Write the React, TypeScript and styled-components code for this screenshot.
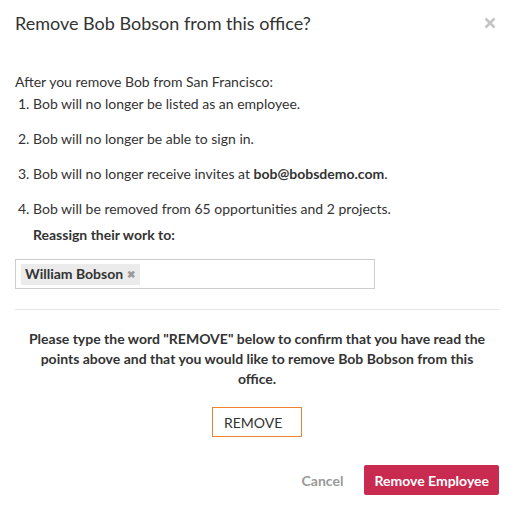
import React, { useState } from "react";
import styled, { createGlobalStyle } from "styled-components";

const GlobalStyle = createGlobalStyle`
  body {
    margin: 0;
    background: #fff;
    font-family: Lato, "Open Sans", Arial, sans-serif;
    color: #333;
  }
`;

const Modal = styled.div`
  width: 514px;
  background: #fff;
`;

const Header = styled.div`
  display: flex;
  align-items: center;
  justify-content: space-between;
  height: 46px;
  padding: 0 18px 0 15px;
  box-sizing: border-box;
`;

const Title = styled.h3`
  margin: 0;
  font-size: 18px;
  font-weight: 400;
  line-height: 22px;
  color: #333;
`;

const CloseButton = styled.button`
  border: 0;
  background: none;
  padding: 0;
  width: 12px;
  height: 14px;
  display: flex;
  align-items: center;
  justify-content: center;
  cursor: pointer;
`;

const Body = styled.div`
  padding: 26px 15px 0;
  font-size: 14px;
  line-height: 20px;
`;

const Intro = styled.p`
  margin: 0 0 2px;
`;

const Steps = styled.ol`
  margin: 0;
  padding-left: 18px;
`;

const Step = styled.li`
  margin-bottom: 15px;
  &:last-child {
    margin-bottom: 6px;
  }
`;

const Label = styled.div`
  padding-left: 18px;
  font-weight: 700;
  margin-bottom: 14px;
`;

const TagInput = styled.div`
  width: 360px;
  height: 30px;
  box-sizing: border-box;
  border: 1px solid #ccc;
  padding: 3px 5px;
  display: flex;
  align-items: center;
`;

const Tag = styled.span`
  display: inline-flex;
  align-items: center;
  gap: 4px;
  height: 21px;
  padding: 0 5px 0 4px;
  background: #ebebeb;
  font-weight: 700;
  font-size: 14px;
  color: #333;
`;

const TagRemove = styled.span`
  font-size: 10px;
  color: #999;
  line-height: 1;
`;

const Divider = styled.hr`
  margin: 20px 0 19px;
  border: 0;
  border-top: 1px solid #e6e6e6;
`;

const Confirm = styled.p`
  margin: 0 0 18px;
  padding: 0 8px;
  text-align: center;
  font-weight: 700;
`;

const ConfirmInput = styled.input`
  display: block;
  margin: 0 auto;
  width: 90px;
  height: 30px;
  box-sizing: border-box;
  border: 1px solid #f0822f;
  padding: 0 11px;
  font-family: inherit;
  font-size: 14px;
  color: #333;
  outline: none;
`;

const Footer = styled.div`
  display: flex;
  justify-content: flex-end;
  align-items: center;
  gap: 21px;
  padding: 28px 15px 0;
`;

const TextButton = styled.button`
  border: 0;
  background: none;
  padding: 0;
  font-family: inherit;
  font-size: 14px;
  font-weight: 700;
  color: #999;
  cursor: pointer;
`;

const DangerButton = styled.button`
  height: 30px;
  padding: 0 10px;
  border: 0;
  border-radius: 2px;
  background: #c92a50;
  color: #fff;
  font-family: inherit;
  font-size: 14px;
  font-weight: 700;
  cursor: pointer;
`;

const CloseIcon = () => (
  <svg width="12" height="12" viewBox="0 0 12 12">
    <path d="M1.5 1.5 L10.5 10.5 M10.5 1.5 L1.5 10.5" stroke="#c4c4c4" strokeWidth="2.6" />
  </svg>
);

const App = () => {
  const [confirmText, setConfirmText] = useState("REMOVE");

  return (
    <>
      <GlobalStyle />
      <Modal>
        <Header>
          <Title>Remove Bob Bobson from this office?</Title>
          <CloseButton aria-label="Close">
            <CloseIcon />
          </CloseButton>
        </Header>
        <Body>
          <Intro>After you remove Bob from San Francisco:</Intro>
          <Steps>
            <Step>Bob will no longer be listed as an employee.</Step>
            <Step>Bob will no longer be able to sign in.</Step>
            <Step>
              Bob will no longer receive invites at <b>bob@bobsdemo.com</b>.
            </Step>
            <Step>Bob will be removed from 65 opportunities and 2 projects.</Step>
          </Steps>
          <Label>Reassign their work to:</Label>
          <TagInput>
            <Tag>
              William Bobson <TagRemove>✖</TagRemove>
            </Tag>
          </TagInput>
          <Divider />
          <Confirm>
            Please type the word "REMOVE" below to confirm that you have read the points
            above and that you would like to remove Bob Bobson from this office.
          </Confirm>
          <ConfirmInput value={confirmText} onChange={(e) => setConfirmText(e.target.value)} />
        </Body>
        <Footer>
          <TextButton>Cancel</TextButton>
          <DangerButton>Remove Employee</DangerButton>
        </Footer>
      </Modal>
    </>
  );
};

export default App;
